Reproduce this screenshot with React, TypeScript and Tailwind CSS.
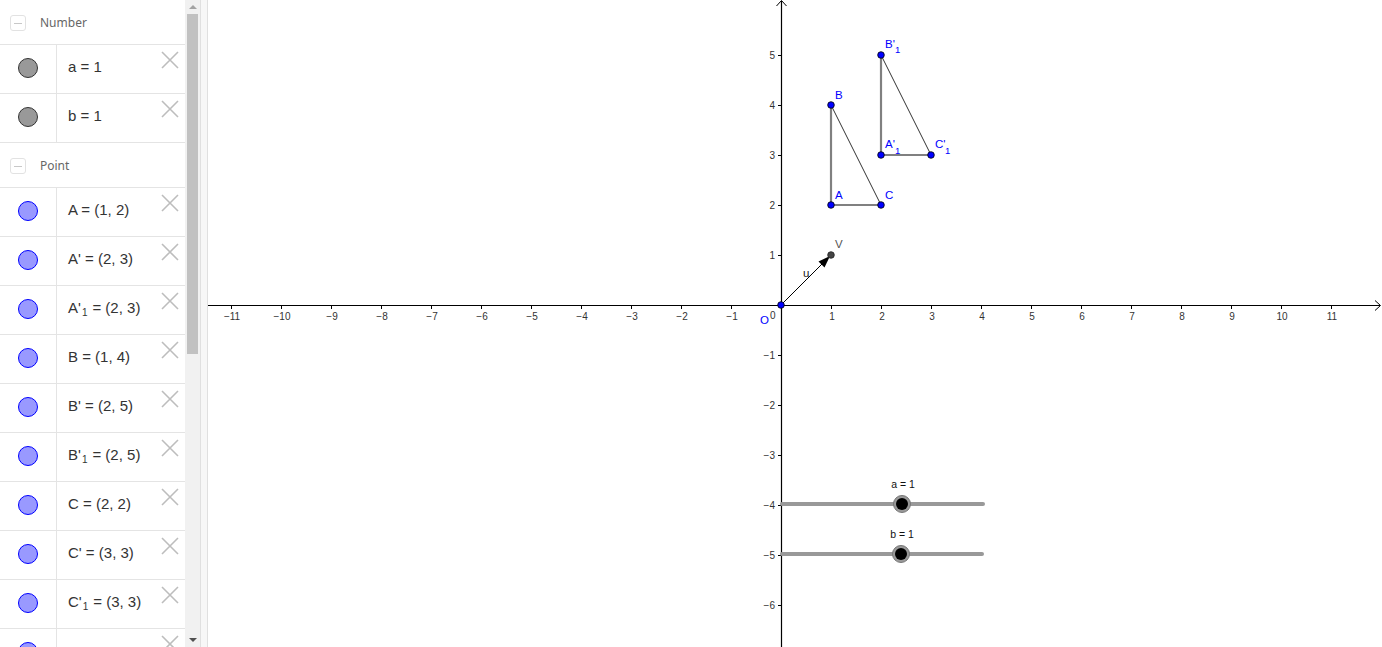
import React from "react";

type Item = { label: React.ReactNode; kind: "num" | "pt" };

const SUB = ({ children }: { children: React.ReactNode }) => (
  <span className="text-[10px] relative top-[4px] ml-[1px] mr-[5px]">{children}</span>
);

const items1: Item[] = [
  { label: <>a = 1</>, kind: "num" },
  { label: <>b = 1</>, kind: "num" },
];

const items2: Item[] = [
  { label: <>A = (1, 2)</>, kind: "pt" },
  { label: <>A' = (2, 3)</>, kind: "pt" },
  { label: <>A'<SUB>1</SUB>= (2, 3)</>, kind: "pt" },
  { label: <>B = (1, 4)</>, kind: "pt" },
  { label: <>B' = (2, 5)</>, kind: "pt" },
  { label: <>B'<SUB>1</SUB>= (2, 5)</>, kind: "pt" },
  { label: <>C = (2, 2)</>, kind: "pt" },
  { label: <>C' = (3, 3)</>, kind: "pt" },
  { label: <>C'<SUB>1</SUB>= (3, 3)</>, kind: "pt" },
  { label: null, kind: "pt" },
];

function XIcon() {
  return (
    <svg width="18" height="18" viewBox="0 0 18 18" className="absolute right-[6px] top-[6px]">
      <path d="M1 1 L17 17 M17 1 L1 17" stroke="#bdbdbd" strokeWidth="1.6" />
    </svg>
  );
}

function Header({ title }: { title: string }) {
  return (
    <div className="h-[45px] shrink-0 border-b border-[#e4e4e4] flex items-center pt-[2px]">
      <div className="ml-[10px] w-[16px] h-[16px] rounded-[3px] border border-[#e2e2e2] flex items-center justify-center">
        <div className="w-[8px] h-[1px] bg-[#c8c8c8]" />
      </div>
      <span className="ml-[14px] text-[12px] text-[#666] font-['Noto_Sans',sans-serif]">{title}</span>
    </div>
  );
}

function Row({ item }: { item: Item }) {
  return (
    <div className="h-[49px] shrink-0 border-b border-[#e4e4e4] flex relative">
      <div className="w-[57px] shrink-0 border-r border-[#e4e4e4] flex items-center justify-center pb-[3px]">
        <div
          className={
            item.kind === "num"
              ? "w-[20px] h-[20px] rounded-full bg-[#999999] border border-[#333333]"
              : "w-[20px] h-[20px] rounded-full bg-[#9999ff] border border-[#0000ff]"
          }
        />
      </div>
      <div className="pl-[11px] pb-[3px] flex items-center text-[15px] text-[#333] font-['Liberation_Sans',sans-serif] whitespace-nowrap">
        {item.label}
      </div>
      <XIcon />
    </div>
  );
}

function Graph() {
  const ox = 781;
  const oy = 305;
  const u = 50;
  const xs: number[] = [];
  for (let k = -11; k <= 11; k++) if (k !== 0) xs.push(k);
  const ys: number[] = [];
  for (let k = -6; k <= 5; k++) if (k !== 0) ys.push(k);
  const P = (x: number, y: number) => [ox + x * u, oy - y * u];
  const pts = [
    [1, 2],
    [1, 4],
    [2, 2],
    [2, 3],
    [2, 5],
    [3, 3],
  ];
  const fmt = (k: number) => (k < 0 ? "\u2212" + Math.abs(k) : String(k));
  const lf = "'Liberation Sans', Arial, sans-serif";
  return (
    <svg width="1174" height="647" viewBox="208 0 1174 647" className="block">
      <rect x="208" y="0" width="1174" height="647" fill="#ffffff" />
      {/* axes */}
      <line x1="208" y1={oy + 0.5} x2="1380" y2={oy + 0.5} stroke="#000" strokeWidth="1.2" />
      <line x1={ox + 0.5} y1="1" x2={ox + 0.5} y2="647" stroke="#000" strokeWidth="1.2" />
      <path d="M1375 300.5 L1380.5 305.5 L1375 310.5" fill="none" stroke="#000" strokeWidth="1" />
      <path d="M776.5 6 L781.5 0.5 L786.5 6" fill="none" stroke="#000" strokeWidth="1" />
      {xs.map((k) => (
        <g key={"x" + k}>
          <line x1={ox + k * u + 0.5} y1={oy} x2={ox + k * u + 0.5} y2={oy + 4} stroke="#000" strokeWidth="1" />
          <text x={ox + k * u + 1} y={oy + 15} fontSize="10" fill="#333" textAnchor="middle" fontFamily={lf}>
            {fmt(k)}
          </text>
        </g>
      ))}
      {ys.map((k) => (
        <g key={"y" + k}>
          <line x1={ox - 3} y1={oy - k * u + 0.5} x2={ox} y2={oy - k * u + 0.5} stroke="#000" strokeWidth="1" />
          <text x={ox - 6} y={oy - k * u + 4} fontSize="10" fill="#333" textAnchor="end" fontFamily={lf}>
            {fmt(k)}
          </text>
        </g>
      ))}
      <text x="770" y="319" fontSize="10" fill="#333" fontFamily={lf}>0</text>
      <text x="760" y="324" fontSize="11.5" fill="#0000ff" fontFamily={lf}>O</text>

      {/* triangle ABC */}
      <line x1={P(1, 2)[0]} y1={P(1, 2)[1]} x2={P(1, 4)[0]} y2={P(1, 4)[1]} stroke="#808080" strokeWidth="2.2" />
      <line x1={P(1, 2)[0]} y1={P(1, 2)[1]} x2={P(2, 2)[0]} y2={P(2, 2)[1]} stroke="#808080" strokeWidth="2.2" />
      <line x1={P(1, 4)[0]} y1={P(1, 4)[1]} x2={P(2, 2)[0]} y2={P(2, 2)[1]} stroke="#333" strokeWidth="1" />
      {/* triangle A'1B'1C'1 */}
      <line x1={P(2, 3)[0]} y1={P(2, 3)[1]} x2={P(2, 5)[0]} y2={P(2, 5)[1]} stroke="#808080" strokeWidth="2.2" />
      <line x1={P(2, 3)[0]} y1={P(2, 3)[1]} x2={P(3, 3)[0]} y2={P(3, 3)[1]} stroke="#808080" strokeWidth="2.2" />
      <line x1={P(2, 5)[0]} y1={P(2, 5)[1]} x2={P(3, 3)[0]} y2={P(3, 3)[1]} stroke="#333" strokeWidth="1" />

      {/* vector u */}
      <line x1={ox} y1={oy} x2="824" y2="262" stroke="#000" strokeWidth="1" />
      <path d="M830 256 L818.5 261.5 L824.5 267.5 Z" fill="#000" />
      <circle cx="831" cy="255" r="3.3" fill="#444" stroke="#222" strokeWidth="0.8" />
      <circle cx={ox} cy={oy} r="3.3" fill="#0000ff" stroke="#000" strokeWidth="0.8" />

      {pts.map(([x, y]) => (
        <circle key={x + "-" + y} cx={P(x, y)[0]} cy={P(x, y)[1]} r="3.3" fill="#0000ff" stroke="#000" strokeWidth="0.8" />
      ))}

      {/* point labels */}
      <g fontSize="11.5" fill="#0000ff" fontFamily={lf}>
        <text x="835" y="99">B</text>
        <text x="885" y="48">B'</text>
        <text x="895" y="53" fontSize="9.5">1</text>
        <text x="835" y="199">A</text>
        <text x="885" y="199">C</text>
        <text x="885" y="148">A'</text>
        <text x="895" y="154" fontSize="9.5">1</text>
        <text x="935" y="148">C'</text>
        <text x="945" y="154" fontSize="9.5">1</text>
      </g>
      <text x="835" y="248" fontSize="11.5" fill="#555" fontFamily={lf}>V</text>
      <text x="803" y="277" fontSize="11.5" fill="#222" fontFamily={lf}>u</text>

      {/* sliders */}
      <line x1="782" y1="504" x2="983" y2="504" stroke="#999" strokeWidth="4" strokeLinecap="round" />
      <circle cx="902" cy="504" r="8.5" fill="#999" stroke="#777" strokeWidth="1" />
      <circle cx="902" cy="504" r="6" fill="#000" />
      <text x="903" y="488" fontSize="10.5" fill="#111" textAnchor="middle" fontFamily={lf}>a = 1</text>

      <line x1="782" y1="554" x2="982" y2="554" stroke="#999" strokeWidth="4" strokeLinecap="round" />
      <circle cx="901" cy="554" r="8.5" fill="#999" stroke="#777" strokeWidth="1" />
      <circle cx="901" cy="554" r="6" fill="#000" />
      <text x="902" y="538" fontSize="10.5" fill="#111" textAnchor="middle" fontFamily={lf}>b = 1</text>
    </svg>
  );
}

export default function App() {
  return (
    <div className="w-[1382px] h-[647px] flex bg-white overflow-hidden">
      <div className="w-[185px] h-[647px] shrink-0 overflow-hidden flex flex-col bg-white">
        <Header title="Number" />
        {items1.map((it, i) => (
          <Row key={"n" + i} item={it} />
        ))}
        <Header title="Point" />
        {items2.map((it, i) => (
          <Row key={"p" + i} item={it} />
        ))}
      </div>
      <div className="w-[15px] h-[647px] shrink-0 bg-[#f1f1f1] flex flex-col items-center">
        <div className="h-[14px] w-full flex items-center justify-center">
          <div className="w-0 h-0 border-l-[4px] border-r-[4px] border-b-[4px] border-l-transparent border-r-transparent border-b-[#a3a3a3]" />
        </div>
        <div className="w-[11px] h-[340px] bg-[#c1c1c1]" />
        <div className="flex-1" />
        <div className="h-[14px] w-full flex items-center justify-center">
          <div className="w-0 h-0 border-l-[4px] border-r-[4px] border-t-[4px] border-l-transparent border-r-transparent border-t-[#505050]" />
        </div>
      </div>
      <div className="w-[8px] h-[647px] shrink-0 bg-[#f7f7f7] border-l border-r border-[#e0e0e0]" />
      <Graph />
    </div>
  );
}
